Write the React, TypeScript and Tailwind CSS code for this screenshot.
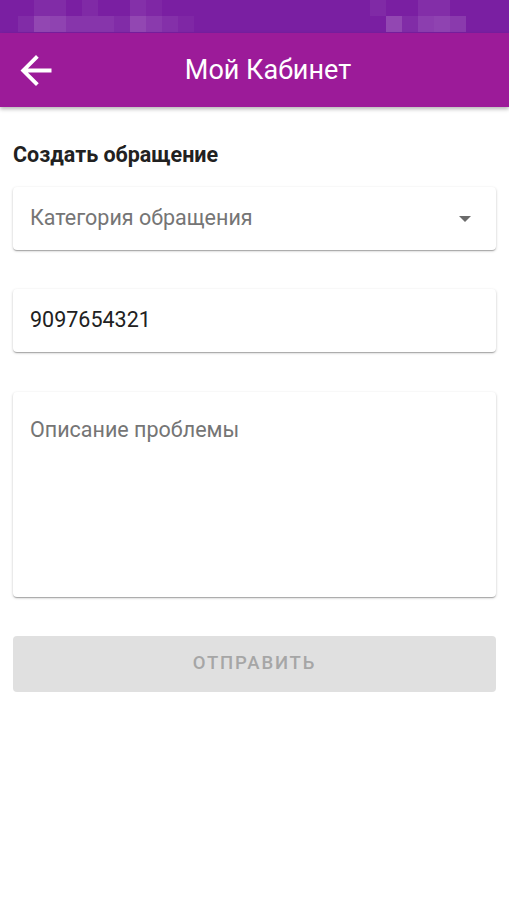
import { useState } from "react";

const topRow = [0, 0, 0.06, 0.06, 0, 0.05, 0, 0, 0.08, 0.04, 0, 0, 0];
const bottomRow = [0, 0.06, 0.18, 0.16, 0.1, 0.1, 0.1, 0.06, 0.18, 0.12, 0.08, 0.04, 0];
const rightTop = [0, 0.05, 0, 0, 0.07, 0.07, 0, 0];
const rightBottom = [0, 0, 0.18, 0.06, 0.14, 0.16, 0.12, 0];

const cardShadow =
  "shadow-[0_1px_3px_rgba(0,0,0,0.2),0_1px_1px_rgba(0,0,0,0.14),0_2px_1px_-1px_rgba(0,0,0,0.12)]";

function Mosaic({ top, bottom }: { top: number[]; bottom: number[] }) {
  return (
    <div className="flex flex-col">
      <div className="flex">
        {top.map((o, i) => (
          <div key={i} className="h-4 w-4 bg-white" style={{ opacity: o }} />
        ))}
      </div>
      <div className="flex">
        {bottom.map((o, i) => (
          <div key={i} className="h-4 w-4 bg-white" style={{ opacity: o }} />
        ))}
      </div>
    </div>
  );
}

export default function App() {
  const [phone, setPhone] = useState("9097654321");
  const [text, setText] = useState("");

  return (
    <div className="min-h-[914px] bg-white font-['Roboto',sans-serif]">
      {/* status bar, blurred */}
      <div className="flex h-[33px] items-start justify-between bg-[#7a1fa2] pl-[2px] pr-[27px]">
        <Mosaic top={topRow} bottom={bottomRow} />
        <Mosaic top={rightTop} bottom={rightBottom} />
      </div>

      <header className="relative z-10 flex h-[74px] items-center bg-[#9c1b99] shadow-[0_2px_4px_rgba(0,0,0,0.3)]">
        <button className="ml-[20px] flex items-center justify-center text-white">
          <svg viewBox="4 4 16 16" className="h-[31px] w-[32px]" fill="currentColor">
            <path d="M20 11H7.83l5.59-5.59L12 4l-8 8 8 8 1.41-1.41L7.83 13H20v-2z" />
          </svg>
        </button>
        <h1 className="flex-1 pr-[25px] text-center text-[27px] text-white">Мой Кабинет</h1>
      </header>

      <main className="px-[13px] pt-[36px]">
        <h2 className="text-[21.5px] font-bold leading-[24px] text-[#212121]">Создать обращение</h2>

        <div className={`mt-[20px] flex h-[63px] items-center justify-between rounded-[4px] bg-white pl-[17px] pr-[25px] ${cardShadow}`}>
          <span className="text-[21.5px] text-[#757575]">Категория обращения</span>
          <svg viewBox="0 0 10 5" className="h-[6px] w-[12px]" fill="#6b6b6b">
            <path d="M0 0l5 5 5-5z" />
          </svg>
        </div>

        <div className={`mt-[39px] flex h-[63px] items-center rounded-[4px] bg-white ${cardShadow}`}>
          <input
            value={phone}
            onChange={(e) => setPhone(e.target.value)}
            className="w-full bg-transparent pl-[17px] text-[21.5px] text-[#212121] outline-none"
          />
        </div>

        <div className={`mt-[40px] h-[205px] rounded-[4px] bg-white ${cardShadow}`}>
          <textarea
            value={text}
            onChange={(e) => setText(e.target.value)}
            placeholder="Описание проблемы"
            className="h-full w-full resize-none bg-transparent px-[17px] pt-[22px] text-[21.5px] text-[#212121] outline-none placeholder:text-[#757575]"
          />
        </div>

        <button
          disabled
          className="mt-[39px] flex h-[56px] w-full items-center justify-center rounded-[4px] bg-[#e0e0e0] text-[18.5px] font-medium tracking-[0.1em] text-[#a6a6a6]"
        >
          ОТПРАВИТЬ
        </button>
      </main>
    </div>
  );
}
